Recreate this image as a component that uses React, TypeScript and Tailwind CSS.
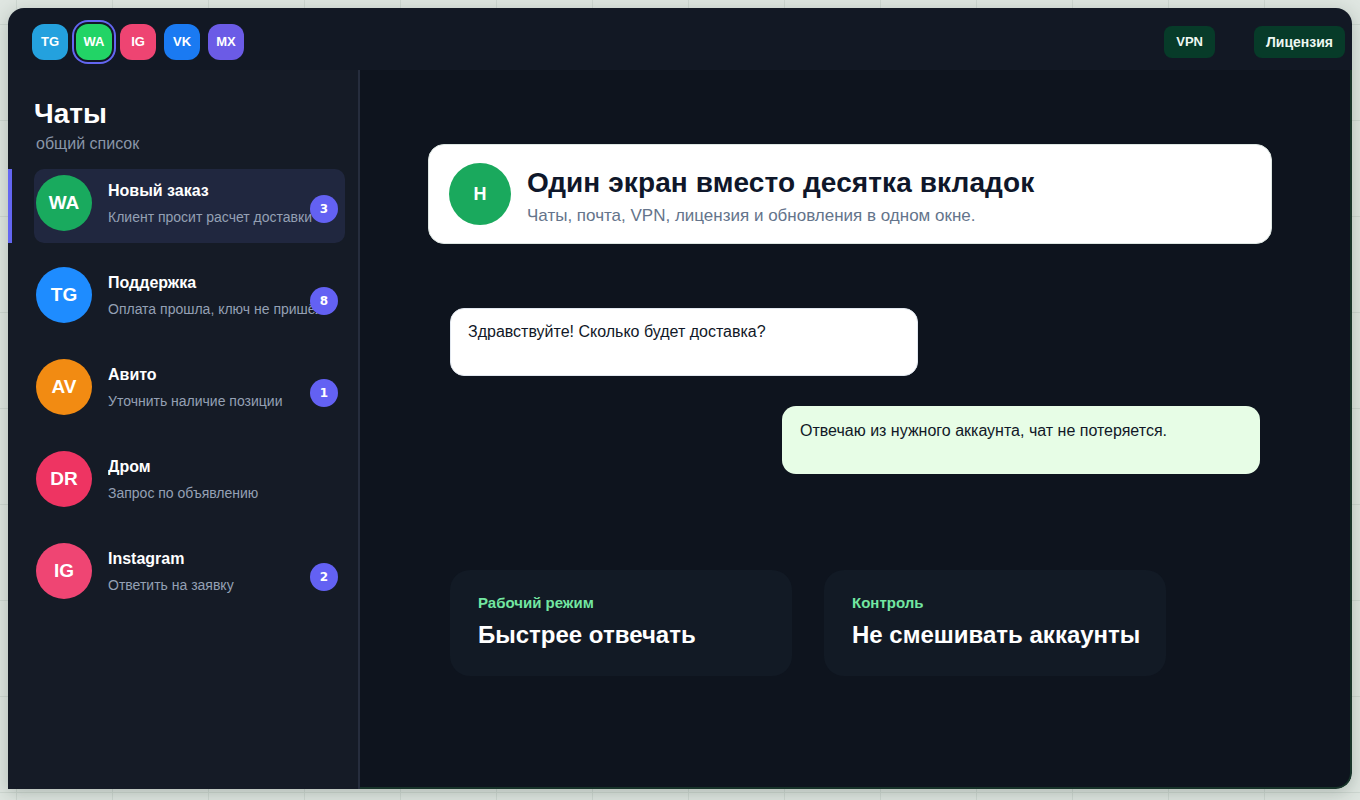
const apps = [
  { id: "TG", color: "bg-[#24a1de]" },
  { id: "WA", color: "bg-[#22d466]", active: true },
  { id: "IG", color: "bg-[#ee4472]" },
  { id: "VK", color: "bg-[#1a7af2]" },
  { id: "MX", color: "bg-[#6b5be6]" },
];

const chats = [
  { tag: "WA", color: "bg-[#19aa5e]", name: "Новый заказ", text: "Клиент просит расчет доставки", badge: 3, active: true },
  { tag: "TG", color: "bg-[#1e8cff]", name: "Поддержка", text: "Оплата прошла, ключ не пришёл", badge: 8 },
  { tag: "AV", color: "bg-[#f28b12]", name: "Авито", text: "Уточнить наличие позиции", badge: 1 },
  { tag: "DR", color: "bg-[#ee3462]", name: "Дром", text: "Запрос по объявлению" },
  { tag: "IG", color: "bg-[#ef4573]", name: "Instagram", text: "Ответить на заявку", badge: 2 },
];

export default function App() {
  return (
    <div className="min-h-screen w-full bg-[#dfe6e1] bg-[linear-gradient(to_right,#cfd8d2_1px,transparent_1px),linear-gradient(to_bottom,#cfd8d2_1px,transparent_1px)] bg-[size:96px_96px] bg-[position:16px_24px] pt-2 pl-2 font-['Liberation_Sans',Arial,sans-serif]">
      <div className="w-[1344px] h-[781px] flex flex-col rounded-t-2xl rounded-br-2xl overflow-hidden shadow-[0_4px_18px_rgba(30,50,40,0.25)]">
        {/* TOP BAR */}
        <header className="h-[62px] shrink-0 bg-[#121824] flex items-center justify-between pt-[6px] pl-6 pr-[7px]">
          <div className="flex items-center gap-2">
            {apps.map((a) => (
              <div
                key={a.id}
                className={`w-9 h-9 rounded-xl flex items-center justify-center text-white text-[13px] font-bold ${a.color} ${
                  a.active ? "ring-2 ring-[#6366f1] ring-offset-2 ring-offset-[#121824]" : ""
                }`}
              >
                {a.id}
              </div>
            ))}
          </div>
          <div className="flex items-center gap-[39px]">
            <button className="h-8 px-3 rounded-lg bg-[#073b29] text-[#eef7f2] text-[13px] font-bold">VPN</button>
            <button className="h-8 px-3 rounded-lg bg-[#073b29] text-[#eef7f2] text-[14px] font-bold">Лицензия</button>
          </div>
        </header>

        <div className="flex flex-1 min-h-0">
          {/* SIDEBAR */}
          <aside className="w-[352px] shrink-0 bg-[#151b26] border-r-2 border-[#262d3d] pt-[27px] pl-[26px] pr-[13px] relative">
            <h1 className="text-[28px] leading-[34px] font-bold text-white">Чаты</h1>
            <p className="text-[16px] leading-5 text-[#8a96a8] ml-[2px] mt-[3px]">общий список</p>

            <div className="flex flex-col gap-[18px] mt-[15px]">
              {chats.map((c) => (
                <div
                  key={c.name}
                  className={`relative h-[74px] flex items-start gap-4 pt-[6px] pl-[2px] pr-[18px] rounded-[10px] ${
                    c.active ? "bg-[#20273f]" : ""
                  }`}
                >
                  {c.active && <span className="absolute -left-[26px] top-0 w-1 h-full bg-[#6366f1]" />}
                  <div className={`w-14 h-14 shrink-0 rounded-full flex items-center justify-center text-white text-[19px] font-bold ${c.color}`}>
                    {c.tag}
                  </div>
                  <div className="flex-1 min-w-0 overflow-hidden whitespace-nowrap flex flex-col gap-[6px] pt-[6px]">
                    <span className="text-[16px] leading-5 font-bold text-white">{c.name}</span>
                    <span className="text-[14px] leading-5 text-[#94a0b4]">{c.text}</span>
                  </div>
                  {c.badge && (
                    <span className="absolute right-[7px] top-[26px] w-7 h-7 rounded-full bg-[#6361f3] text-white text-[12px] font-bold flex items-center justify-center font-['DejaVu_Sans',sans-serif]">
                      {c.badge}
                    </span>
                  )}
                </div>
              ))}
            </div>
          </aside>

          {/* MAIN */}
          <main className="flex-1 bg-[#0e141e] border-r-2 border-b-2 border-[#18342a] rounded-br-2xl pl-[68px] pt-[74px]">
            <div className="w-[844px] h-[100px] bg-white border border-[#dde6e2] rounded-2xl flex items-center gap-4 pl-5">
              <div className="w-[62px] h-[62px] rounded-full bg-[#1aa95d] flex items-center justify-center text-white text-[18px] font-bold">
                H
              </div>
              <div className="flex flex-col pt-[5px]">
                <h2 className="text-[28px] leading-[34px] font-bold text-[#0f172a] tracking-[0.1px]">Один экран вместо десятка вкладок</h2>
                <p className="text-[17px] leading-6 text-[#64748b] mt-1">Чаты, почта, VPN, лицензия и обновления в одном окне.</p>
              </div>
            </div>

            <div className="ml-[22px] w-[810px] flex flex-col mt-[64px] gap-[30px]">
              <div className="w-[468px] h-[68px] bg-white border border-[#e2e8f0] rounded-[14px] px-[17px] pt-[11px] text-[16px] leading-6 text-[#111827]">
                Здравствуйте! Сколько будет доставка?
              </div>
              <div className="self-end w-[478px] h-[68px] bg-[#e7fde6] rounded-[14px] px-[18px] pt-[13px] text-[16px] leading-6 text-[#111827]">
                Отвечаю из нужного аккаунта, чат не потеряется.
              </div>
            </div>

            <div className="ml-[22px] flex gap-8 mt-[96px]">
              <div className="w-[342px] h-[106px] bg-[#121a25] rounded-[20px] pl-7 pt-[23px]">
                <p className="text-[15px] leading-5 font-bold text-[#72e6a1]">Рабочий режим</p>
                <p className="text-[24px] leading-[30px] font-bold text-white mt-[7px]">Быстрее отвечать</p>
              </div>
              <div className="w-[342px] h-[106px] bg-[#121a25] rounded-[20px] pl-7 pt-[23px]">
                <p className="text-[15px] leading-5 font-bold text-[#72e6a1]">Контроль</p>
                <p className="text-[24px] leading-[30px] font-bold text-white mt-[7px]">Не смешивать аккаунты</p>
              </div>
            </div>
          </main>
        </div>
      </div>
    </div>
  );
}
